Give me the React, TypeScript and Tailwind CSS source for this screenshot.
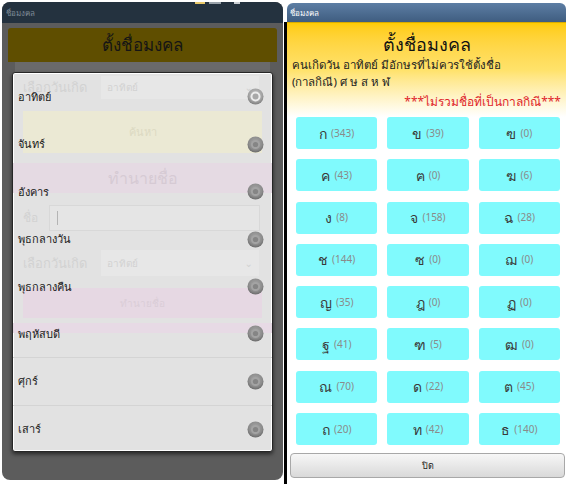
import React from 'react';

const days = ['อาทิตย์', 'จันทร์', 'อังคาร', 'พุธกลางวัน', 'พุธกลางคืน', 'พฤหัสบดี', 'ศุกร์', 'เสาร์'];

const letters: [string, number][] = [
  ['ก', 343], ['ข', 39], ['ฃ', 0],
  ['ค', 43], ['ฅ', 0], ['ฆ', 6],
  ['ง', 8], ['จ', 158], ['ฉ', 28],
  ['ช', 144], ['ซ', 0], ['ฌ', 0],
  ['ญ', 35], ['ฎ', 0], ['ฏ', 0],
  ['ฐ', 41], ['ฑ', 5], ['ฒ', 0],
  ['ณ', 70], ['ด', 22], ['ต', 45],
  ['ถ', 20], ['ท', 42], ['ธ', 140],
];

function Radio({ checked }: { checked: boolean }) {
  const id = checked ? 'rOn' : 'rOff';
  return (
    <svg width="17" height="17" viewBox="0 0 17 17">
      <defs>
        <radialGradient id={id + 'o'} cx="50%" cy="40%" r="60%">
          <stop offset="0%" stopColor={checked ? '#c4c4c4' : '#a9a9a9'} />
          <stop offset="70%" stopColor={checked ? '#a2a2a2' : '#8c8c8c'} />
          <stop offset="100%" stopColor={checked ? '#7c7c7c' : '#6a6a6a'} />
        </radialGradient>
      </defs>
      <circle cx="8.5" cy="8.5" r="8" fill={`url(#${id}o)`} />
      {checked ? (
        <>
          <circle cx="8.5" cy="8.5" r="5" fill="#ececec" />
          <circle cx="8.5" cy="8.5" r="3" fill="#a8a8a8" />
        </>
      ) : (
        <>
          <circle cx="8.5" cy="8.5" r="4.6" fill="#a3a3a3" />
          <circle cx="8.5" cy="8.5" r="2.6" fill="#858585" />
        </>
      )}
    </svg>
  );
}

function GhostForm() {
  return (
    <div className="absolute inset-0 flex flex-col pointer-events-none text-[#d2d2d2]">
      {/* faded form seen through the dialog */}
      <div className="mt-[3px] h-[23px] flex items-center px-[10px]">
        <span className="w-[78px] text-[13px] leading-none whitespace-nowrap">เลือกวันเกิด</span>
        <div className="flex-1 mr-[3px] h-full bg-[#e7e7e7] flex items-center justify-between px-[6px] text-[10px]">
          <span>อาทิตย์</span>
          <span className="text-[10px]">⌄</span>
        </div>
      </div>
      <div className="mt-[12px] mx-[10px] h-[42px] bg-[#ebe9d4] flex items-center justify-center text-[11px] text-[#dcd9c2]">ค้นหา</div>
      <div className="mt-[10px] h-[30px] bg-[#e5dae3] flex items-center justify-center text-[16px] text-[#d6cad4]">ทำนายชื่อ</div>
      <div className="mt-[12px] h-[26px] flex items-center px-[10px]">
        <span className="w-[26px] text-[12px]">ชื่อ</span>
        <div className="flex-1 mr-[2px] h-full border border-[#d8d8d8] bg-[#e5e5e5] flex items-center pl-[7px]">
          <span className="w-px h-[14px] bg-[#b4b4b4]" />
        </div>
      </div>
      <div className="mt-[19px] h-[26px] flex items-center px-[10px]">
        <span className="w-[78px] text-[13px] leading-none whitespace-nowrap">เลือกวันเกิด</span>
        <div className="flex-1 mr-[3px] h-full bg-[#e7e7e7] flex items-center justify-between px-[6px] text-[10px]">
          <span>อาทิตย์</span>
          <span className="text-[10px]">⌄</span>
        </div>
      </div>
      <div className="mt-[12px] mx-[10px] h-[30px] bg-[#e6d8e3] flex items-center justify-center text-[10px] text-[#dacdd7]">ทำนายชื่อ</div>
      <div className="mt-[5px] h-[10px] bg-[#e7dae5]" />
    </div>
  );
}

function LeftScreen() {
  return (
    <div className="relative mt-[2px] ml-[2px] w-[281px] h-[478px] rounded-[8px] overflow-hidden bg-[#5c5c5c] flex flex-col">
      <div className="relative h-[21px] bg-[#24323f] flex items-center px-[4px]">
        <span className="text-[8px] text-[#7f8c98]">ชื่อมงคล</span>
        <span className="absolute top-0 left-[193px] w-[10px] h-[2px] bg-[#e9c96a]" />
        <span className="absolute top-0 left-[207px] w-[12px] h-[2px] bg-[#9aa3ab]" />
        <span className="absolute top-0 left-[232px] w-[6px] h-[2px] bg-[#c9ced3]" />
      </div>
      <div className="flex flex-col px-[6px] pt-[5px]">
        <div className="h-[34px] rounded-t-[3px] bg-[#5f4e00] flex items-center justify-center">
          <span className="text-[17px] text-[#151515]">ตั้งชื่อมงคล</span>
        </div>
        <div className="mx-[7px] h-[260px] bg-[#6a6a6a]" />
      </div>

      {/* day picker dialog */}
      <div className="absolute left-[10px] top-[70px] w-[261px] h-[380px] rounded-[3px] border border-[#262626] bg-[#e2e2e2] shadow-[inset_0_0_0_1px_#ffffff,0_2px_4px_rgba(0,0,0,0.6)] overflow-hidden">
        <GhostForm />
        <div className="relative flex flex-col">
          {days.map((d, i) => (
            <div
              key={d}
              className={`h-[47.5px] flex items-center justify-between pl-[5px] pr-[8px] ${i < 7 && i > 4 ? 'border-b border-[#d4d4d4]' : ''}`}
            >
              <span className="text-[11px] text-[#1a1a1a]">{d}</span>
              <Radio checked={i === 0} />
            </div>
          ))}
        </div>
      </div>
    </div>
  );
}

function RightScreen() {
  return (
    <div className="flex flex-col w-[282px] mt-[3px] ml-[1px]">
      <div className="ml-[3px] h-[19px] rounded-t-[6px] bg-gradient-to-b from-[#5d7ea4] to-[#3f5d80] flex items-center px-[3px]">
        <span className="text-[8px] text-white">ชื่อมงคล</span>
      </div>
      <div className="flex-1 border-l-[3px] border-black bg-white flex flex-col">
        <div className="bg-gradient-to-b from-[#ffcc00] via-[#ffe26a] to-white pt-[9px] pb-[7px] px-[5px] border-t border-[#d9ab00]">
          <p className="text-center text-[18px] leading-[24px] text-[#111]">ตั้งชื่อมงคล</p>
          <p className="text-[11.5px] leading-[17px] text-[#222]">คนเกิดวัน อาทิตย์ มีอักษรที่ไม่ควรใช้ตั้งชื่อ</p>
          <p className="text-[11.5px] leading-[17px] text-[#222]">(กาลกิณี) ศ ษ ส ห ฬ</p>
          <p className="mt-[4px] text-right text-[12px] leading-[16px] text-[#e0262a]">***ไม่รวมชื่อที่เป็นกาลกิณี***</p>
        </div>
        <div className="grid grid-cols-3 gap-x-[10px] gap-y-[10.3px] pl-[9px] pr-[6px]">
          {letters.map(([ch, n]) => (
            <div key={ch} className="h-[32px] rounded-[3px] bg-[#80fafd] flex items-center justify-center gap-[4px]">
              <span className="text-[14px] text-[#3a3a3a]">{ch}</span>
              <span className="text-[10px] text-[#8a8a8a]">({n})</span>
            </div>
          ))}
        </div>
        <div className="mt-[8px] ml-[3px] mr-[1px] h-[25px] rounded-[4px] border border-[#a8a8a8] bg-gradient-to-b from-[#f7f7f7] to-[#d9d9d9] flex items-center justify-center">
          <span className="text-[9px] text-[#222]">ปิด</span>
        </div>
      </div>
    </div>
  );
}

export default function App() {
  return (
    <div className="w-[570px] h-[484px] bg-white flex font-['Noto_Sans','DejaVu_Sans',sans-serif] overflow-hidden">
      <LeftScreen />
      <RightScreen />
    </div>
  );
}
